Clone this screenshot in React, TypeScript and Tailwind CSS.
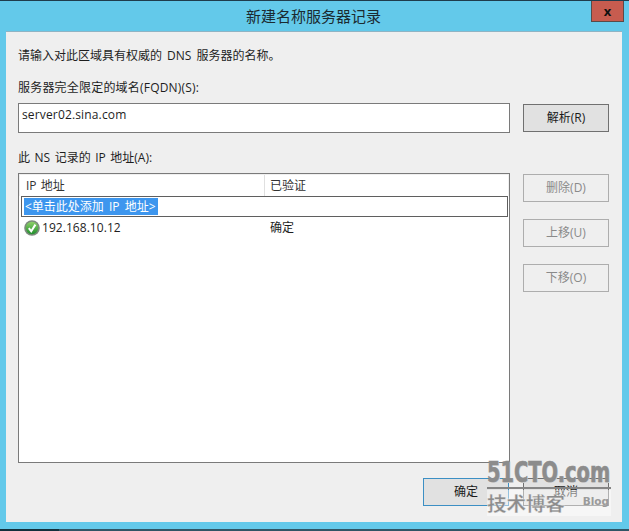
const ui = "font-['Open_Sans','Noto_Sans_CJK_SC',sans-serif]";

function Btn({ label, disabled, focus, className = "" }: { label: string; disabled?: boolean; focus?: boolean; className?: string }) {
  const look = disabled
    ? "border-[#adadad] bg-[#efefef] text-[#8a8a8a]"
    : focus
      ? "border-[#3c8fc4] bg-[#e1e1e1] text-[#1a1a1a]"
      : "border-[#707070] bg-[#e1e1e1] text-[#1a1a1a]";
  return (
    <div className={`flex h-[28px] w-[86px] items-center justify-center border text-[12px] ${look} ${className}`}>
      {label}
    </div>
  );
}

function OkIcon() {
  return (
    <svg width="16" height="16" viewBox="0 0 16 16" className="shrink-0">
      <defs>
        <linearGradient id="okFill" x1="0" y1="0" x2="0" y2="1">
          <stop offset="0" stopColor="#8fd06a" />
          <stop offset="1" stopColor="#1f8f2c" />
        </linearGradient>
      </defs>
      <circle cx="8" cy="8" r="7.8" fill="#7c8a7c" />
      <circle cx="8" cy="8" r="6.2" fill="url(#okFill)" />
      <path d="M4.8 8.2 L7.2 11.2 L11.4 4.6" fill="none" stroke="#fff" strokeWidth="2" />
    </svg>
  );
}

function Watermark() {
  return (
    <div className="pointer-events-none absolute left-[487px] top-[458px] h-[58px] w-[124px] text-[#8c8c8c]">
      <div className="origin-left scale-x-[0.67] font-['DejaVu_Sans',sans-serif] text-[29px] leading-[29px] font-bold whitespace-nowrap [-webkit-text-stroke:0.7px_#8c8c8c] [text-shadow:1px_1px_0_#d8d8d8]">
        51CTO.com
      </div>
      <div className="h-[2px] w-full bg-[#858585]" />
      <div className="mt-[1px] flex h-[26px] items-start justify-between bg-white/45">
        <span className="font-['Noto_Sans_CJK_SC',sans-serif] text-[19.5px] leading-[26px] font-bold [-webkit-text-stroke:0.3px_#f4f4f4]">技术博客</span>
        <span className="mt-[1px] mr-[2px] font-['DejaVu_Sans',sans-serif] text-[10.5px] leading-[20px] font-bold whitespace-nowrap text-[#9a9a9a]">Blog</span>
      </div>
    </div>
  );
}

export default function App() {
  return (
    <div className={`relative flex h-[531px] w-[629px] flex-col overflow-hidden bg-[#63c9ea] ${ui}`}>
      {/* title bar */}
      <div className="h-px bg-[#1f3c4c]" />
      <div className="relative flex h-[30px] items-center justify-center pr-[2px]">
        <span className="text-[15px] text-[#1b2a30]">新建名称服务器记录</span>
        <div className="absolute right-[5px] top-0 flex h-[21px] w-[33px] items-center justify-center border border-t-0 border-[#5a4a48] bg-[#c75c4f] text-[13px] leading-none font-bold text-[#111]">
          x
        </div>
      </div>

      {/* dialog body */}
      <div className="mx-[6px] flex h-[491px] w-[616px] flex-col border-t border-[#8fb4c4] bg-[#efefef] px-[12px] text-[12px] text-[#1e1e1e]">
        <div className="mt-[15px] h-[17px] leading-[17px] [word-spacing:2px]">请输入对此区域具有权威的 DNS 服务器的名称。</div>
        <div className="mt-[15px] h-[17px] leading-[17px] tracking-[0.2px]">服务器完全限定的域名(FQDN)(S):</div>

        <div className="mt-[7px] flex items-center gap-[13px]">
          <div className="flex h-[30px] w-[492px] items-start border border-[#7a7a7a] bg-white px-[3px] pt-[2px] text-[12px] leading-[18px] tracking-[0.15px]">
            server02.sina.com
          </div>
          <Btn label="解析(R)" />
        </div>

        <div className="mt-[16px] h-[17px] leading-[17px] [word-spacing:1.4px]">此 NS 记录的 IP 地址(A):</div>

        <div className="mt-[7px] flex items-start gap-[13px]">
          <div className="h-[290px] w-[492px] border border-[#7a7a7a] bg-white">
            <div className="flex h-[22px] border border-b-0 border-[#f0f0f0] leading-[21px] text-[#333]">
              <div className="w-[245px] border-r border-[#e0e0e0] pl-[6px] [word-spacing:1px]">IP 地址</div>
              <div className="pl-[5px]">已验证</div>
            </div>
            <div className="ml-[2px] mr-px flex h-[21px] items-center border border-[#5f5f5f] px-[2px]">
              <span className="bg-[#3d96ee] px-[1px] pr-[2px] leading-[17px] text-white [word-spacing:2px]">&lt;单击此处添加 IP 地址&gt;</span>
            </div>
            <div className="flex h-[22px] items-center pl-[5px]">
              <div className="flex w-[240px] items-center gap-[2px]">
                <OkIcon />
                <span className="text-[12px] tracking-[0.05px]">192.168.10.12</span>
              </div>
              <span className="pl-[6px]">确定</span>
            </div>
          </div>
          <div className="flex flex-col gap-[17px] pt-px">
            <Btn label="删除(D)" disabled />
            <Btn label="上移(U)" disabled />
            <Btn label="下移(O)" disabled />
          </div>
        </div>

        <div className="mt-[15px] flex justify-end gap-[14px] pr-px">
          <Btn label="确定" focus />
          <Btn label="取消" />
        </div>
      </div>

      <div className="mt-auto flex h-[2px]">
        <div className="w-[59px] bg-[#12303c]" />
        <div className="flex-1 bg-[#2f5565]" />
      </div>

      <Watermark />
    </div>
  );
}
